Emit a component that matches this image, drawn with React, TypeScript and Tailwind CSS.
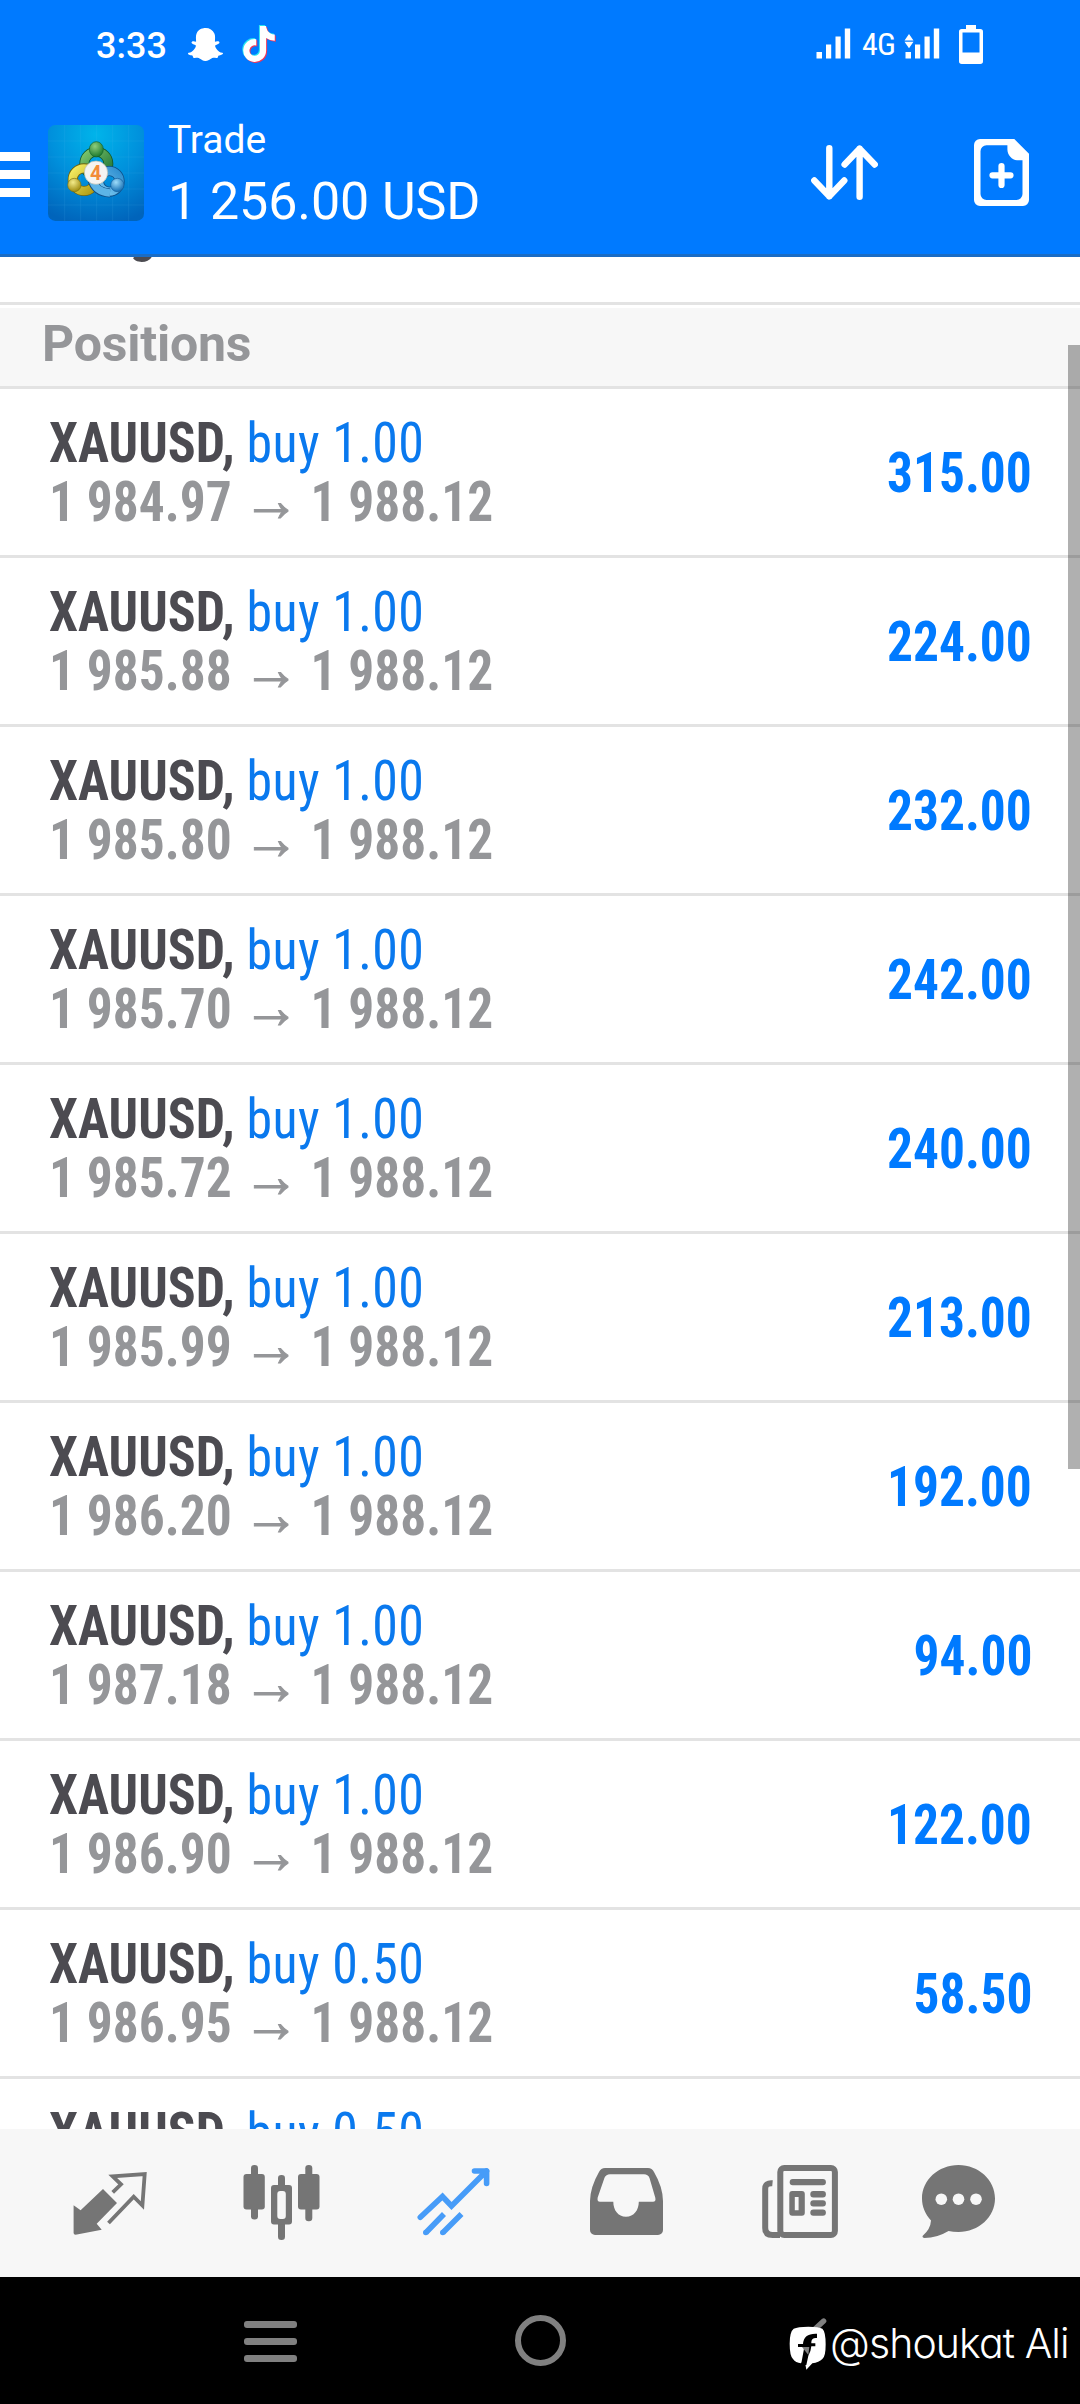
// App.tsx
import type { ReactNode } from 'react';
import { FaSnapchatGhost, FaTiktok } from 'react-icons/fa';

interface Position {
  symbol: string;
  side: string;
  open: string;
  current: string;
  profit: string;
}

const positions: Position[] = [
  { symbol: 'XAUUSD', side: 'buy 1.00', open: '1 984.97', current: '1 988.12', profit: '315.00' },
  { symbol: 'XAUUSD', side: 'buy 1.00', open: '1 985.88', current: '1 988.12', profit: '224.00' },
  { symbol: 'XAUUSD', side: 'buy 1.00', open: '1 985.80', current: '1 988.12', profit: '232.00' },
  { symbol: 'XAUUSD', side: 'buy 1.00', open: '1 985.70', current: '1 988.12', profit: '242.00' },
  { symbol: 'XAUUSD', side: 'buy 1.00', open: '1 985.72', current: '1 988.12', profit: '240.00' },
  { symbol: 'XAUUSD', side: 'buy 1.00', open: '1 985.99', current: '1 988.12', profit: '213.00' },
  { symbol: 'XAUUSD', side: 'buy 1.00', open: '1 986.20', current: '1 988.12', profit: '192.00' },
  { symbol: 'XAUUSD', side: 'buy 1.00', open: '1 987.18', current: '1 988.12', profit: '94.00' },
  { symbol: 'XAUUSD', side: 'buy 1.00', open: '1 986.90', current: '1 988.12', profit: '122.00' },
  { symbol: 'XAUUSD', side: 'buy 0.50', open: '1 986.95', current: '1 988.12', profit: '58.50' },
  { symbol: 'XAUUSD', side: 'buy 0.50', open: '1 986.95', current: '1 988.12', profit: '58.50' },
];

function SignalBars({ data = false }: { data?: boolean }) {
  return (
    <svg width="35" height="32" viewBox="0 0 35 32" fill="#fff" className="overflow-visible">
      <rect x="0.5" y="24" width="5.5" height="6.5" />
      <rect x="10" y="16.5" width="5.2" height="14" />
      <rect x="19.5" y="8.5" width="5.2" height="22" />
      <rect x="28.8" y="0.5" width="5.4" height="30" />
      {data && <path d="M4 6l4.5 6.4h-9zM4 20.2l-4.5-6.4h9z" />}
    </svg>
  );
}

function Battery() {
  return (
    <svg width="24" height="39" viewBox="0 0 24 39">
      <path d="M7 0h10v4h-10z" fill="#fff" />
      <rect x="1.75" y="5.75" width="20.5" height="31.5" rx="1" fill="none" stroke="#fff" strokeWidth="3.5" />
      <rect x="1" y="27.5" width="22" height="10" fill="#fff" />
    </svg>
  );
}

function StatusBar() {
  return (
    <div className="flex h-[88px] items-center pr-[97px] pl-[96px] text-white">
      <span className="pt-1 text-[36px] leading-[40px] font-medium">3:33</span>
      <FaSnapchatGhost className="ml-[21px] size-[35px]" />
      <div className="relative ml-[18px] h-[36px] w-[33px]">
        <FaTiktok className="absolute -top-px -left-px size-[36px] text-[#25e5f0]" />
        <FaTiktok className="absolute top-px left-px size-[36px] text-[#f0365a]" />
        <FaTiktok className="absolute top-0 left-0 size-[36px]" />
      </div>
      <div className="ml-auto flex items-center">
        <SignalBars />
        <span className="ml-[11px] w-[43px] font-['Roboto_Condensed'] text-[32px] leading-[40px] tracking-[-0.8px]">4G</span>
        <SignalBars data />
        <div className="ml-[19px]">
          <Battery />
        </div>
      </div>
    </div>
  );
}

function AppLogo() {
  return (
    <svg width="96" height="96" viewBox="0 0 288 288" className="ml-[18px] -mt-[3px]">
      <defs>
        <radialGradient id="tile" cx="0.5" cy="0.1" r="0.95">
          <stop offset="0" stopColor="#00b4ea" />
          <stop offset="0.5" stopColor="#0090dc" />
          <stop offset="1" stopColor="#0064bb" />
        </radialGradient>
        <linearGradient id="green" x1="0" y1="0" x2="1" y2="1">
          <stop offset="0" stopColor="#7cc46c" />
          <stop offset="1" stopColor="#1f7434" />
        </linearGradient>
        <linearGradient id="yellow" x1="0" y1="0" x2="1" y2="1">
          <stop offset="0" stopColor="#f4ec62" />
          <stop offset="1" stopColor="#b09a12" />
        </linearGradient>
        <linearGradient id="blue" x1="1" y1="0" x2="0" y2="1">
          <stop offset="0" stopColor="#2f8fd0" />
          <stop offset="1" stopColor="#7ccbf2" />
        </linearGradient>
        <radialGradient id="greenHead" cx="0.4" cy="0.3" r="0.7">
          <stop offset="0" stopColor="#8fce7c" />
          <stop offset="1" stopColor="#1c7a2e" />
        </radialGradient>
        <radialGradient id="yellowHead" cx="0.4" cy="0.3" r="0.7">
          <stop offset="0" stopColor="#f3eb8a" />
          <stop offset="1" stopColor="#a08c10" />
        </radialGradient>
        <radialGradient id="blueHead" cx="0.4" cy="0.3" r="0.7">
          <stop offset="0" stopColor="#9ddcfa" />
          <stop offset="1" stopColor="#1670b4" />
        </radialGradient>
      </defs>
      <rect width="288" height="288" rx="22" fill="url(#tile)" />
      <path d="M50 0v288M98 0v288M146 0v288M194 0v288M242 0v288M0 48h288M0 96h288M0 144h288M0 192h288M0 240h288" stroke="#5cc4f4" strokeOpacity="0.18" strokeWidth="2" />
      <g fill="none">
        <circle cx="145" cy="116" r="36" stroke="#12582a" strokeWidth="30" />
        <circle cx="145" cy="116" r="36" stroke="url(#green)" strokeWidth="25" />
        <circle cx="184" cy="169" r="31" stroke="#0f4f88" strokeWidth="30" />
        <circle cx="184" cy="169" r="31" stroke="url(#blue)" strokeWidth="25" />
        <circle cx="108" cy="164" r="34" stroke="#6d6410" strokeWidth="30" />
        <circle cx="108" cy="164" r="34" stroke="url(#yellow)" strokeWidth="25" />
        <path d="M132 166q12 36 54 38" stroke="#0f4f88" strokeWidth="27" />
        <path d="M132 164q12 38 54 40" stroke="#5db4e6" strokeWidth="22" />
      </g>
      <ellipse cx="145" cy="73" rx="21" ry="23" fill="url(#greenHead)" stroke="#14602a" strokeWidth="2" />
      <circle cx="79" cy="180" r="20" fill="url(#yellowHead)" stroke="#7d7210" strokeWidth="2" />
      <circle cx="208" cy="180" r="20" fill="url(#blueHead)" stroke="#135c9a" strokeWidth="2" />
      <circle cx="144" cy="143" r="35" fill="#f4f4f2" stroke="#b9bcae" strokeWidth="2" />
      <text x="143" y="164" textAnchor="middle" fontFamily="Roboto" fontSize="60" fontWeight="700" fill="#f28c38">4</text>
    </svg>
  );
}

function Header() {
  return (
    <header className="h-[257px] shrink-0 border-b-[3px] border-[#1a6cc4] bg-[#007aff]">
      <StatusBar />
      <div className="flex h-[166px] items-center pt-[6px] pr-[51px] text-white">
        <div className="flex w-[30px] flex-col gap-[9px]">
          <i className="h-[9px] bg-white" />
          <i className="h-[9px] bg-white" />
          <i className="h-[9px] bg-white" />
        </div>
        <AppLogo />
        <div className="ml-[24px] flex flex-col gap-[9px] whitespace-nowrap">
          <h1 className="text-[39px] leading-[46px]">Trade</h1>
          <p className="text-[52px] leading-[60px] tracking-[-0.1px]">1 256.00 USD</p>
        </div>
        <div className="-mt-[3px] ml-auto flex items-center gap-[96px]">
          <svg width="67" height="55" viewBox="0 0 67 55" fill="none" stroke="#fff" strokeWidth="6.4" strokeLinecap="round" strokeLinejoin="round">
            <path d="M18.3 3.3v48M3.3 35.5l15 15.8 15-15.8M48.6 51.7v-48M33.6 19.5l15-15.8 15.1 15.8" />
          </svg>
          <svg width="55" height="67" viewBox="0 0 55 67">
            <path
              fill="#fff"
              fillRule="evenodd"
              d="M6 0h34.3L55 14.7V61a6 6 0 0 1-6 6H6a6 6 0 0 1-6-6V6a6 6 0 0 1 6-6zM12.5 6.2A6 6 0 0 0 6.5 12.2V55a6 6 0 0 0 6 6H42.5a6 6 0 0 0 6-6V21.2H43C38 21 33.4 16 33.4 10.5V6.2z"
            />
            <path d="M27.5 27v19M18.5 36.3h18" stroke="#fff" strokeWidth="6.2" strokeLinecap="round" />
          </svg>
        </div>
      </div>
    </header>
  );
}

function PositionRow({ position }: { position: Position }) {
  return (
    <li className="flex h-[169px] items-center justify-between border-b-[3px] border-[#e3e3e3] pr-[48px] pl-[49px] font-['Roboto_Condensed'] text-[56px] leading-[59px] whitespace-pre">
      <div className="pt-[2px] font-bold">
        <p className="h-[59px] origin-left scale-x-[0.926] text-[#4c4b51]">
          {position.symbol}, <span className="font-normal tracking-[0.4px] text-[#0a79ee]">{position.side}</span>
        </p>
        <p className="h-[59px] origin-left scale-x-[0.918] text-[#959699]">
          {position.open} <span className="-mx-px text-[62px] leading-[0] [-webkit-text-stroke:1px]">→</span> {position.current}
        </p>
      </div>
      <span className="origin-right scale-x-[0.918] pt-[2px] font-bold text-[#007aff]">{position.profit}</span>
    </li>
  );
}

function PositionList() {
  return (
    <main className="relative h-[1872px] shrink-0 overflow-hidden bg-white">
      <div className="flex h-[48px] items-end border-b-[3px] border-[#e3e3e3] pb-[40px] pl-[49px]">
        <span className="origin-left scale-x-[0.926] font-['Roboto_Condensed'] text-[56px] leading-[59px] font-bold text-[#4c4b51]">Margin:</span>
      </div>
      <h2 className="mt-[3px] h-[81px] border-b-[3px] border-[#e3e3e3] bg-[#f7f7f7] pl-[42px] text-[50px] leading-[72px] font-bold tracking-[-0.2px] text-[#959699]">
        Positions
      </h2>
      <ul>
        {positions.map((position, i) => (
          <PositionRow key={i} position={position} />
        ))}
      </ul>
      <div className="absolute top-[88px] right-0 h-[1124px] w-[12px] bg-black/31" />
    </main>
  );
}

function Tab({ className, width, children }: { className?: string; width: number; children: ReactNode }) {
  return (
    <button className={className}>
      <svg width={width} height="80" viewBox={`0 0 ${width} 80`} className="block" fill="currentColor">
        {children}
      </svg>
    </button>
  );
}

function TabBar() {
  return (
    <nav className="flex h-[148px] shrink-0 items-center bg-[#f7f7f7] pl-[73px] text-[#757575]">
      <Tab width={75}>
        <path d="M.6 42.3l7 5L30 26l14 14-20.3 20.7 5 6L2.6 71.7Q.6 71.7.6 70z" />
        <path d="M39.7 29.3L48 21.3l-8.3-8 32-2.3-2.3 31.5-8.7-8.8L35.5 60" fill="none" stroke="currentColor" strokeWidth="3.8" />
      </Tab>
      <Tab className="ml-[95px]" width={78}>
        <rect x="8" y="2" width="7" height="54.5" rx="3.3" />
        <rect x="0.5" y="11" width="21.3" height="35.5" rx="3" />
        <rect x="62.3" y="2" width="7" height="56.3" rx="3.3" />
        <rect x="55" y="11" width="21.5" height="35.5" rx="3" />
        <rect x="35" y="12" width="7" height="14" rx="3.3" />
        <rect x="35" y="58" width="7" height="19" rx="3.3" />
        <path fillRule="evenodd" d="M31 22h15a3 3 0 0 1 3 3v33.5a3 3 0 0 1-3 3H31a3 3 0 0 1-3-3V25a3 3 0 0 1 3-3zm6.3 6a3 3 0 0 0-3 3v22a3 3 0 0 0 3 3h2.5a3 3 0 0 0 3-3V31a3 3 0 0 0-3-3z" />
      </Tab>
      <Tab className="ml-[96px] text-[#479cf8]" width={74}>
        <g fill="none" stroke="currentColor" strokeWidth="5.6">
          <path d="M3.3 54.3L25.5 33.5l9 9.5L69.5 8" strokeLinecap="round" />
          <path d="M57.5 8H69.6V20.5" strokeLinecap="round" strokeLinejoin="round" />
          <path d="M9 69.5L27 51M26 69.5L44.5 51" />
        </g>
        <circle cx="8.8" cy="69.5" r="2.8" />
        <circle cx="25.8" cy="69.5" r="2.8" />
        <path d="M60 7h10v12z" />
      </Tab>
      <Tab className="ml-[99px]" width={74}>
        <path
          fillRule="evenodd"
          d="M15 5H58q4 0 6 4 8.8 15 9 29V67a5 5 0 0 1-5 5H5a5 5 0 0 1-5-5V38Q.3 24 9 9q2-4 6-4zM20 11.3q-4 0-5.5 3.5L7.7 34.5Q6.8 38.7 10 38.7H23.3C23.3 47 28 53.7 36 53.7S48.8 47 48.8 38.7H63q3.2 0 2.3-4L59.5 15q-1.5-3.7-5.5-3.7z"
        />
      </Tab>
      <Tab className="ml-[98px]" width={77}>
        <g fill="none" stroke="currentColor" strokeWidth="6">
          <rect x="18.3" y="5" width="54.6" height="67" rx="4" />
          <path d="M10.5 20.2Q3.2 19.5 3.2 26V65q0 7 7.5 7H18" />
        </g>
        <rect x="27.7" y="16" width="36.2" height="6.3" rx="3" />
        <path fillRule="evenodd" d="M30.3 28h9.5a3 3 0 0 1 3 3v18.7a3 3 0 0 1-3 3h-9.5a3 3 0 0 1-3-3V31a3 3 0 0 1 3-3zM32.8 34v13.2h3.8V34z" />
        <rect x="48.3" y="28" width="15.6" height="6.4" rx="3" />
        <rect x="48.3" y="37.2" width="15.6" height="6.4" rx="3" />
        <rect x="48.3" y="46.4" width="15.6" height="6.4" rx="3" />
      </Tab>
      <Tab className="ml-[83px]" width={74}>
        <path d="M36.5 2C56.7 2 73 17 73 35.5S56.7 69 36.5 69Q31 69 26.5 68 15 75 2.5 75-.5 74.5 1 72.5 8.5 66 9 57.5C3 51 0 43.5 0 35.5 0 17 16.3 2 36.5 2z" />
        <g fill="#f7f7f7">
          <circle cx="19.3" cy="36.2" r="5.8" />
          <circle cx="36.5" cy="36.2" r="5.8" />
          <circle cx="54" cy="36.2" r="5.8" />
        </g>
      </Tab>
    </nav>
  );
}

function SystemBar() {
  return (
    <footer className="flex h-[127px] shrink-0 items-center bg-black pl-[244px]">
      <div className="flex w-[53px] flex-col gap-[10px] pt-[2px]">
        <i className="h-[7px] rounded-[3px] bg-[#808080]" />
        <i className="h-[7px] rounded-[3px] bg-[#808080]" />
        <i className="h-[7px] rounded-[3px] bg-[#808080]" />
      </div>
      <div className="ml-[218px] size-[51px] rounded-full border-[6.5px] border-[#808080]" />
      <div className="ml-[223px] flex items-center pt-[4px]">
        {/* profile badge over the back chevron */}
        <svg width="40" height="56" viewBox="0 0 120 168" className="shrink-0">
          <path d="M104 18L78 42" stroke="#808080" strokeWidth="16" strokeLinecap="round" />
          <path d="M14 41Q26 35 58 35T100 41Q110 50 110 88T100 132Q90 142 70 145L52 164 49 148 52 128 36 145Q20 143 12 132 2 122 2 86T14 41z" fill="#fff" />
          <path d="M84 56v13q-16-2-17 12v4h12v9H67q-1 14-9 28L52 150H36l10-54H27v-9h15Q44 54 84 56z" fill="#000" />
          <path d="M39 96l22 0-3 24z" fill="#808080" />
        </svg>
        <span className="ml-px font-['Inter'] text-[41px] leading-[50px] font-light tracking-[-0.9px] whitespace-nowrap text-white [font-feature-settings:'cv11']">
          @shoukat Ali
        </span>
      </div>
    </footer>
  );
}

export default function App() {
  return (
    <div className="flex h-[2404px] w-[1080px] flex-col overflow-hidden bg-white font-['Roboto',sans-serif]">
      <Header />
      <PositionList />
      <TabBar />
      <SystemBar />
    </div>
  );
}
